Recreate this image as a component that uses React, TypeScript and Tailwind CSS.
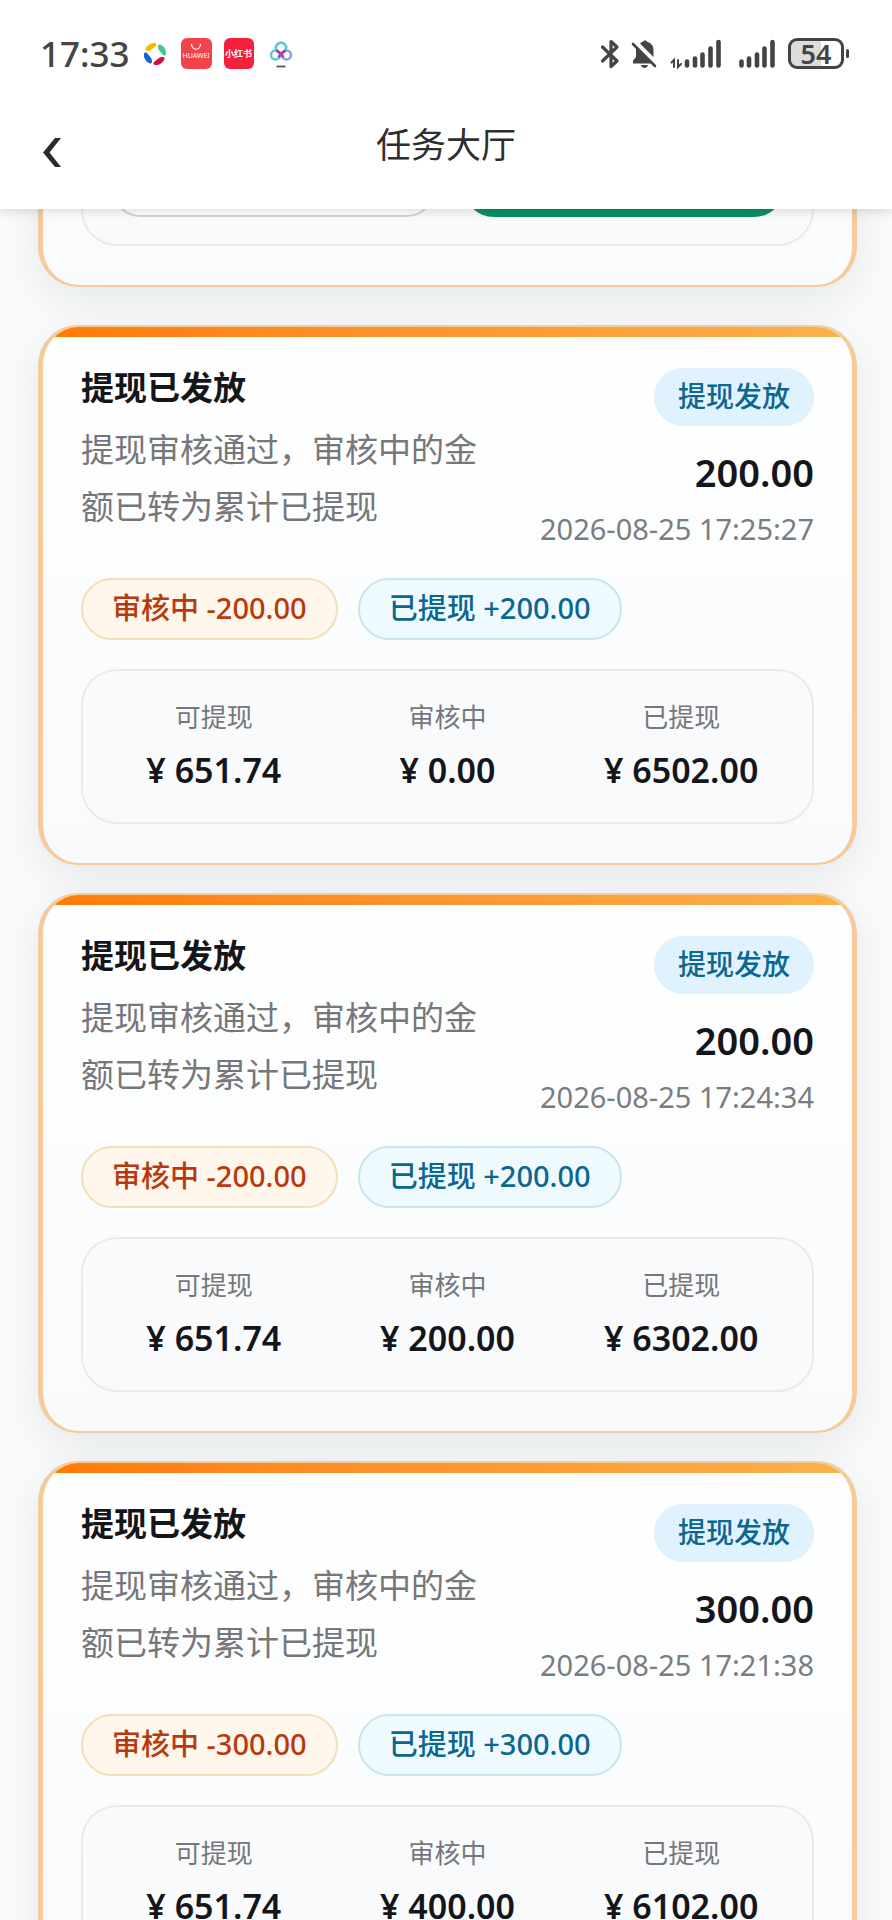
import type { ReactNode } from 'react';

interface WithdrawRecord {
  amount: string;
  time: string;
  available: string;
  pending: string;
  withdrawn: string;
}

const records: WithdrawRecord[] = [
  { amount: '200.00', time: '2026-08-25 17:25:27', available: '651.74', pending: '0.00', withdrawn: '6502.00' },
  { amount: '200.00', time: '2026-08-25 17:24:34', available: '651.74', pending: '200.00', withdrawn: '6302.00' },
  { amount: '300.00', time: '2026-08-25 17:21:38', available: '651.74', pending: '400.00', withdrawn: '6102.00' },
];

const SwirlIcon = () => (
  <svg viewBox="0 0 24 24" className="size-6">
    <path d="M2.500 7C4 3 8 .5 12 1c2 .3 2 2.500.5 3.500L8 8C6 9.500 2 9.500 2.500 7z" fill="#f5bd00" />
    <path d="M17 2.500c4 1.500 6.500 5.500 6 9.500-.3 2-2.500 2-3.500.5L16 8c-1.500-2-1.500-6 1-5.500z" fill="#3cc795" />
    <path d="M21.500 17c-1.500 4-5.500 6.500-9.500 6-2-.3-2-2.500-.5-3.500L16 16c2-1.500 6-1.500 5.500 1z" fill="#d0103c" />
    <path d="M7 21.500C3 20 .5 16 1 12c.3-2 2.500-2 3.500-.5L8 16c1.500 2 1.500 6-1 5.500z" fill="#1465d8" />
  </svg>
);

const CloudIcon = () => (
  <svg viewBox="0 0 24 30" className="h-[30px] w-6" fill="none" strokeWidth="2.600">
    <circle cx="6.500" cy="16" r="4.500" stroke="#5fc6dc" />
    <circle cx="17.500" cy="16" r="4.500" stroke="#8aa6d8" />
    <path d="M7.800 11.500a5 5 0 1 1 8.400 0" stroke="#58c8d4" />
    <path d="M7.500 11.500c2 1 3 3 4.500 3s2.500-2 4.500-3" stroke="#c22a8c" />
    <path d="M9.500 18.500l2.500-4 2.500 4" stroke="#a04cb8" />
    <path d="M7.500 27.500h9" stroke="#555" strokeWidth="1.800" />
  </svg>
);

const BluetoothIcon = () => (
  <svg viewBox="0 0 20 30" className="h-[30px] w-5" fill="none" stroke="#444" strokeWidth="3.200" strokeLinecap="round" strokeLinejoin="round">
    <path d="M2.500 8L17 22l-6 5.500V2.500L17 8 2.500 22" />
  </svg>
);

const BellOffIcon = () => (
  <svg viewBox="0 0 26 30" className="h-[30px] w-[26px]">
    <path d="M5 9L20.500 24.500H2v-3L5 18z" fill="#444" />
    <path d="M9 4.500C10 3.600 11 3 12 2.800 12.500 1 15.500 1 16 2.800c4 1 6.500 4 6.500 8V18z" fill="#444" />
    <path d="M10 26h7c-.5 2-2 3-3.500 3S10.500 28 10 26z" fill="#444" />
    <path d="M2 5l22 22" stroke="#444" strokeWidth="2.600" strokeLinecap="round" />
  </svg>
);

const DataSignalIcon = () => (
  <svg viewBox="0 0 52 30" className="h-[30px] w-[52px]" fill="none" stroke="#444" strokeLinecap="round">
    <path d="M1.500 23.500L4 21v7M8 21v7l3-3" strokeWidth="2" />
    <path d="M17 22.500v4M25 19.500v7M32.500 15.500v11M40.500 9.500v17M48.500 3v23.500" strokeWidth="4.600" />
  </svg>
);

const SignalIcon = () => (
  <svg viewBox="0 0 36 30" className="h-[30px] w-9" fill="none" stroke="#444" strokeWidth="4.600" strokeLinecap="round">
    <path d="M2.500 22.500v4M10 19.500v7M18 15.500v11M25.500 9.500v17M33.500 3v23.500" />
  </svg>
);

const StatusBar = () => (
  <div className="flex h-[107px] items-center pl-10 pr-[43px] text-[#444]">
    <span className="text-[35px] leading-[40px] font-medium">17:33</span>
    <div className="ml-[13px] flex items-center gap-3">
      <SwirlIcon />
      <div className="ml-[2px] flex h-[31px] w-[31px] flex-col items-center rounded-[6px] bg-[#f2434a] text-white">
        <svg viewBox="0 0 12 8" className="mt-[5px] h-2 w-3" fill="none" stroke="#fff" strokeWidth="1.200">
          <path d="M1.500 1c0 7 9 7 9 0" />
        </svg>
        <span className="text-[7px] leading-[10px]">HUAWEI</span>
      </div>
      <div className="flex h-[31px] w-[30px] items-center justify-center rounded-[6px] bg-[#f5203c] text-[9px] font-bold whitespace-nowrap text-white">
        小红书
      </div>
      <div className="pl-[3px]">
        <CloudIcon />
      </div>
    </div>
    <div className="ml-auto flex items-center">
      <BluetoothIcon />
      <div className="ml-[11px]">
        <BellOffIcon />
      </div>
      <div className="ml-[13px]">
        <DataSignalIcon />
      </div>
      <div className="ml-[17px]">
        <SignalIcon />
      </div>
      <div className="ml-[13px] flex h-[31px] w-[56px] items-center justify-center rounded-[9px] border-[3px] border-[#444] bg-linear-to-r from-[#dcdcdc] from-60% to-white to-60% text-[27px] leading-[26px] font-semibold">
        54
      </div>
      <div className="ml-[2px] h-[9px] w-[3px] rounded-full bg-[#444]" />
    </div>
  </div>
);

const Header = () => (
  <header className="relative z-10 bg-white shadow-[0_2px_10px_rgba(0,0,0,0.14)]">
    <StatusBar />
    <div className="grid h-[102px] grid-cols-[1fr_auto_1fr] items-start px-10">
      <button type="button" aria-label="返回" className="mt-[29px] w-6">
        <svg viewBox="0 0 24 34" className="h-[34px] w-6" fill="#2b2b2b">
          <path d="M21 2h-6L3 16.500 15 31h6L9.500 16.500z" />
        </svg>
      </button>
      <h1 className="mt-[14px] text-[35px] leading-[48px] text-[#2e2e2e]">任务大厅</h1>
    </div>
  </header>
);

const Card = ({ children }: { children: ReactNode }) => (
  <section className="overflow-hidden rounded-[40px] border-x-[5px] border-y-2 border-[#f3cb9c] bg-linear-to-b from-white to-[#f8fafc] shadow-[0_12px_44px_rgba(15,23,42,0.08)]">
    <div className="h-[10px] bg-linear-to-r from-[#ff7a00] to-[#fbb14a]" />
    <div className="px-[38px] pt-[31px] pb-[39px]">{children}</div>
  </section>
);

const Balance = ({ label, value }: { label: string; value: string }) => (
  <div className="text-center">
    <div className="text-[26px] leading-[36px] text-[#75777b]">{label}</div>
    <div className="mt-[13px] text-[34px] leading-[44px] font-semibold text-[#15161a]">¥ {value}</div>
  </div>
);

const RecordCard = ({ record }: { record: WithdrawRecord }) => (
  <Card>
    <div className="flex items-start justify-between">
      <div className="w-[410px]">
        <h2 className="text-[33px] leading-[40px] font-bold text-[#15161a]">提现已发放</h2>
        <p className="mt-[13px] text-[33px] leading-[57px] text-[#75777b]">提现审核通过，审核中的金额已转为累计已提现</p>
      </div>
      <div className="flex flex-col items-end">
        <span className="rounded-full bg-[#e0f2fe] px-6 pt-[8px] pb-[10px] text-[28px] leading-[40px] font-medium text-[#0b6690]">提现发放</span>
        <span className="mt-[22px] text-[38px] leading-[48px] font-semibold text-[#15161a]">{record.amount}</span>
        <time className="mt-[13px] text-[29px] leading-[40px] text-[#7b7c80]">{record.time}</time>
      </div>
    </div>
    <div className="mt-[29px] flex gap-5">
      <span className="rounded-full border-2 border-[#f3dfba] bg-[#fff6ec] px-[29px] pt-[8px] pb-[10px] text-[29px] leading-[40px] font-medium text-[#b8390e]">
        审核中 -{record.amount}
      </span>
      <span className="rounded-full border-2 border-[#c8e7ea] bg-[#effaff] px-[29px] pt-[8px] pb-[10px] text-[29px] leading-[40px] font-medium text-[#0b6690]">
        已提现 +{record.amount}
      </span>
    </div>
    <div className="mt-[29px] grid grid-cols-3 rounded-[36px] border-2 border-[#e8eaec] bg-[#f9fafc] px-[14px] pt-[28px] pb-[30px]">
      <Balance label="可提现" value={record.available} />
      <Balance label="审核中" value={record.pending} />
      <Balance label="已提现" value={record.withdrawn} />
    </div>
  </Card>
);

export default function App() {
  return (
    <div className="flex h-screen flex-col overflow-hidden bg-[#f8fafb] font-['Noto_Sans','Noto_Sans_CJK_SC',sans-serif]">
      <Header />
      <main className="min-h-0 flex-1 overflow-hidden pl-[38px] pr-[35px]">
        {/* scrolled so that only the foot of the first card shows */}
        <div className="-mt-[126px]">
          <Card>
            <div className="flex gap-[26px] rounded-[36px] border-2 border-[#e8eaec] bg-[#f9fafc] p-[27px]">
              <button type="button" className="h-[62px] flex-1 rounded-full border-2 border-[#d2d4d6] bg-white" />
              <button type="button" className="h-[62px] flex-1 rounded-full bg-[#0a8f65]" />
            </div>
          </Card>
        </div>
        <div className="mt-[38px] flex flex-col gap-7">
          {records.map((record) => (
            <RecordCard key={record.time} record={record} />
          ))}
        </div>
      </main>
    </div>
  );
}
